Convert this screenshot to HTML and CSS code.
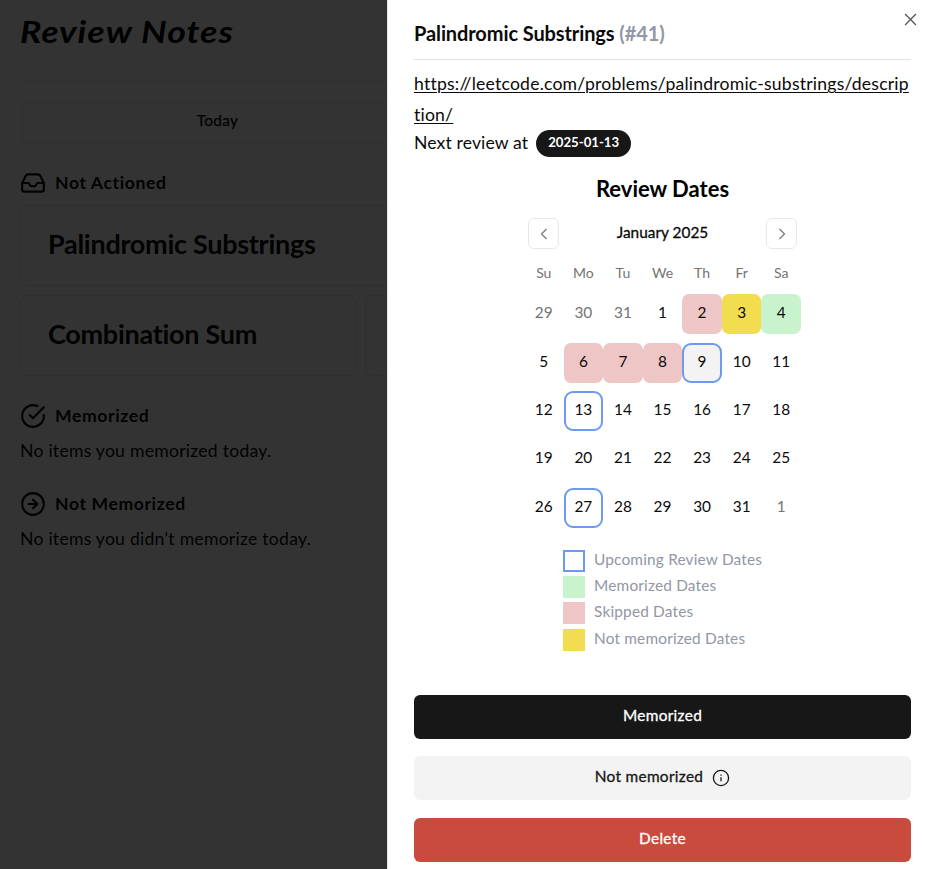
FILE: index.html
```html
<!DOCTYPE html>
<html lang="en">
<head>
<meta charset="utf-8">
<title>Review Notes</title>
<link rel="stylesheet" href="styles.css">
</head>
<body>
<main class="page">
  <h1 class="brand"><span>Review Notes</span></h1>
  <div class="tabs"><div class="tab">Today</div></div>
  <h2 class="section-title">
    <svg viewBox="0 0 24 24" class="icon"><path d="M22 12h-6l-2 3h-4l-2-3H2"/><path d="M5.45 5.11 2 12v6a2 2 0 0 0 2 2h16a2 2 0 0 0 2-2v-6l-3.45-6.89A2 2 0 0 0 16.76 4H7.24a2 2 0 0 0-1.79 1.11z"/></svg>
    <span>Not Actioned</span>
  </h2>
  <div class="cards">
    <div class="card wide">Palindromic Substrings</div>
    <div class="card">Combination Sum</div>
    <div class="card"></div>
  </div>
  <h2 class="section-title memorized">
    <svg viewBox="0 0 24 24" class="icon"><path d="M22 11.08V12a10 10 0 1 1-5.93-9.14"/><path d="m22 4-10 10.01-3-3"/></svg>
    <span>Memorized</span>
  </h2>
  <p class="empty">No items you memorized today.</p>
  <h2 class="section-title not-memorized">
    <svg viewBox="0 0 24 24" class="icon"><circle cx="12" cy="12" r="10"/><path d="M8 12h8M12 16l4-4-4-4"/></svg>
    <span>Not Memorized</span>
  </h2>
  <p class="empty">No items you didn't memorize today.</p>
</main>
<div class="overlay"></div>
<aside class="sheet">
  <button class="close" aria-label="Close"><svg viewBox="0 0 12 12"><path d="M1 1l10 10M11 1L1 11"/></svg></button>
  <h2 class="sheet-title">Palindromic Substrings <span>(#41)</span></h2>
  <a class="link">https://leetcode.com/problems/palindromic-substrings/description/</a>
  <div class="next"><span>Next review at</span><b class="badge">2025-01-13</b></div>
  <h3 class="dates-title">Review Dates</h3>
  <div class="calendar">
    <div class="cal-head">
      <button class="nav"><svg viewBox="0 0 8 12"><path d="M6.5 1L1.5 6l5 5"/></svg></button>
      <span class="month">January 2025</span>
      <button class="nav"><svg viewBox="0 0 8 12"><path d="M1.5 1l5 5-5 5"/></svg></button>
    </div>
    <div class="week names"><span>Su</span><span>Mo</span><span>Tu</span><span>We</span><span>Th</span><span>Fr</span><span>Sa</span></div>
    <div class="week"><span class="out">29</span><span class="out">30</span><span class="out">31</span><span>1</span><span class="skipped">2</span><span class="missed">3</span><span class="done">4</span></div>
    <div class="week"><span>5</span><span class="skipped">6</span><span class="skipped">7</span><span class="skipped">8</span><span class="upcoming today">9</span><span>10</span><span>11</span></div>
    <div class="week"><span>12</span><span class="upcoming">13</span><span>14</span><span>15</span><span>16</span><span>17</span><span>18</span></div>
    <div class="week"><span>19</span><span>20</span><span>21</span><span>22</span><span>23</span><span>24</span><span>25</span></div>
    <div class="week"><span>26</span><span class="upcoming">27</span><span>28</span><span>29</span><span>30</span><span>31</span><span class="out">1</span></div>
  </div>
  <ul class="legend">
    <li><i class="upcoming"></i>Upcoming Review Dates</li>
    <li><i class="done"></i>Memorized Dates</li>
    <li><i class="skipped"></i>Skipped Dates</li>
    <li><i class="missed"></i>Not memorized Dates</li>
  </ul>
  <div class="actions">
    <button class="btn dark">Memorized</button>
    <button class="btn light">Not memorized<svg viewBox="0 0 18 18"><circle cx="9" cy="9" r="7.6"/><path d="M9 8.3v4M9 5.4v1.4"/></svg></button>
    <button class="btn red">Delete</button>
  </div>
</aside>
</body>
</html>
```
FILE: styles.css
```css
* { box-sizing: border-box; margin: 0; padding: 0; }
body {
  height: 869px;
  overflow: hidden;
  background: #fff;
  color: #0a0a0a;
  font-family: Lato, "Liberation Sans", sans-serif;
  font-variant-ligatures: none;
}
button { border: 0; background: none; font: inherit; color: inherit; }

.page { width: 927px; height: 869px; padding: 0 20px; overflow: hidden; }
.brand {
  height: 82px;
  padding-top: 13px;
  border-bottom: 1px solid #e5e5e5;
  font: italic 700 30px/36px "Segoe Print", "Bradley Hand", Lato, cursive;
  letter-spacing: .8px;
  color: #000;
}
.brand span { display: inline-block; transform: scaleX(1.19); transform-origin: left; }
.tabs { height: 44px; margin-top: 18px; padding: 4px; background: #f5f5f5; border-radius: 6px; }
.tab {
  width: 387px;
  height: 36px;
  background: #fff;
  border-radius: 4px;
  text-align: center;
  font-size: 15.4px;
  line-height: 32px;
  letter-spacing: .3px;
  -webkit-text-stroke: .25px;
}
.section-title {
  display: flex;
  align-items: center;
  gap: 9px;
  height: 26px;
  margin-top: 26px;
  font-size: 17.6px;
  line-height: 26px;
  letter-spacing: .6px;
}
.icon { width: 26px; height: 26px; fill: none; stroke: currentColor; stroke-width: 2; stroke-linecap: round; stroke-linejoin: round; }
.cards { display: grid; grid-template-columns: 336px 1fr; gap: 9px; margin-top: 9px; }
.card { height: 81px; padding: 0 27px; border: 1px solid #e5e5e5; border-radius: 8px; font-size: 27px; font-weight: 700; line-height: 76px; letter-spacing: -.28px; }
.wide { grid-column: span 2; }
.memorized { margin-top: 27px; }
.not-memorized { margin-top: 26px; }
.empty { height: 36px; font-size: 17.6px; line-height: 44px; letter-spacing: .25px; }
.overlay { position: fixed; inset: 0; background: rgba(0, 0, 0, .8); }

.sheet { position: fixed; top: 0; right: 0; bottom: 0; width: 540px; padding: 0 16px 0 26px; border-left: 1px solid #e5e5e5; background: #fff; }
.close { position: absolute; top: 13px; right: 10px; width: 13px; height: 13px; }
.close svg { display: block; width: 13px; height: 13px; fill: none; stroke: #555; stroke-width: 1.2; }
.sheet-title { height: 60px; padding-top: 20px; border-bottom: 1px solid #e2e2e2; font-size: 20px; line-height: 26px; letter-spacing: -.1px; }
.sheet-title span { color: #9296a6; }
.link { display: block; margin-top: 8px; font-size: 17.6px; line-height: 31px; letter-spacing: .2px; text-decoration: underline; text-decoration-thickness: 1px; text-underline-offset: 2px; word-break: break-all; }
.next { display: flex; align-items: center; height: 27px; font-size: 17.6px; line-height: 25px; letter-spacing: .12px; }
.next span { padding-bottom: 2px; }
.badge { width: 95px; height: 27px; margin-left: 8px; border-radius: 14px; background: #171717; color: #fff; font-size: 13.2px; line-height: 25px; letter-spacing: 0; text-align: center; }
.dates-title { margin-top: 18px; text-align: center; font-size: 22px; line-height: 28px; color: #000; }
.calendar { width: 277px; margin: 15px 0 0 110px; }
.cal-head { display: flex; justify-content: space-between; align-items: center; height: 31px; padding: 0 4px; }
.nav { display: flex; align-items: center; justify-content: center; width: 31px; height: 31px; border: 1px solid #e8e8e8; border-radius: 6px; }
.nav svg { width: 8px; height: 12px; fill: none; stroke: #777; stroke-width: 1.2; }
.month { padding-bottom: 2px; font-size: 15.4px; line-height: 29px; -webkit-text-stroke: .3px; }
.week { display: grid; grid-template-columns: repeat(7, 1fr); height: 40px; margin-top: 8.42px; font-size: 15.4px; line-height: 37px; text-align: center; }
.week span { border-radius: 7px; }
.names { height: 22px; margin: 14px 0 9.15px; font-size: 14px; line-height: 20px; color: #737373; }
.names + .week { margin-top: 0; }
.out { color: #737373; }
.skipped { background: #eec6c5; }
.missed { background: #f2dc4f; }
.done { background: #c8f3cc; }
.upcoming { border: 2px solid #6c99f3; }
.week .upcoming { border-radius: 9px; line-height: 33px; }
.today { background: #f3f3f3; }
.legend { margin: 22.2px 0 0 149px; list-style: none; }
.legend li { display: flex; height: 26.2px; font-size: 15.4px; line-height: 19px; letter-spacing: .18px; color: #9296a6; }
.legend i { width: 22px; height: 22px; margin-right: 9px; }
.actions { display: grid; gap: 17px; margin-top: 40.2px; }
.btn { display: flex; align-items: center; justify-content: center; height: 44px; padding-bottom: 4px; border-radius: 6px; font-size: 15.4px; letter-spacing: .3px; -webkit-text-stroke: .3px; }
.dark { background: #171717; color: #fff; }
.light { background: #f3f3f3; color: #171717; }
.red { margin-top: 1px; background: #c94b3d; color: #fff; }
.light svg { width: 18px; height: 18px; margin: 5px 0 0 9px; fill: none; stroke: currentColor; stroke-width: 1.3; }
```
